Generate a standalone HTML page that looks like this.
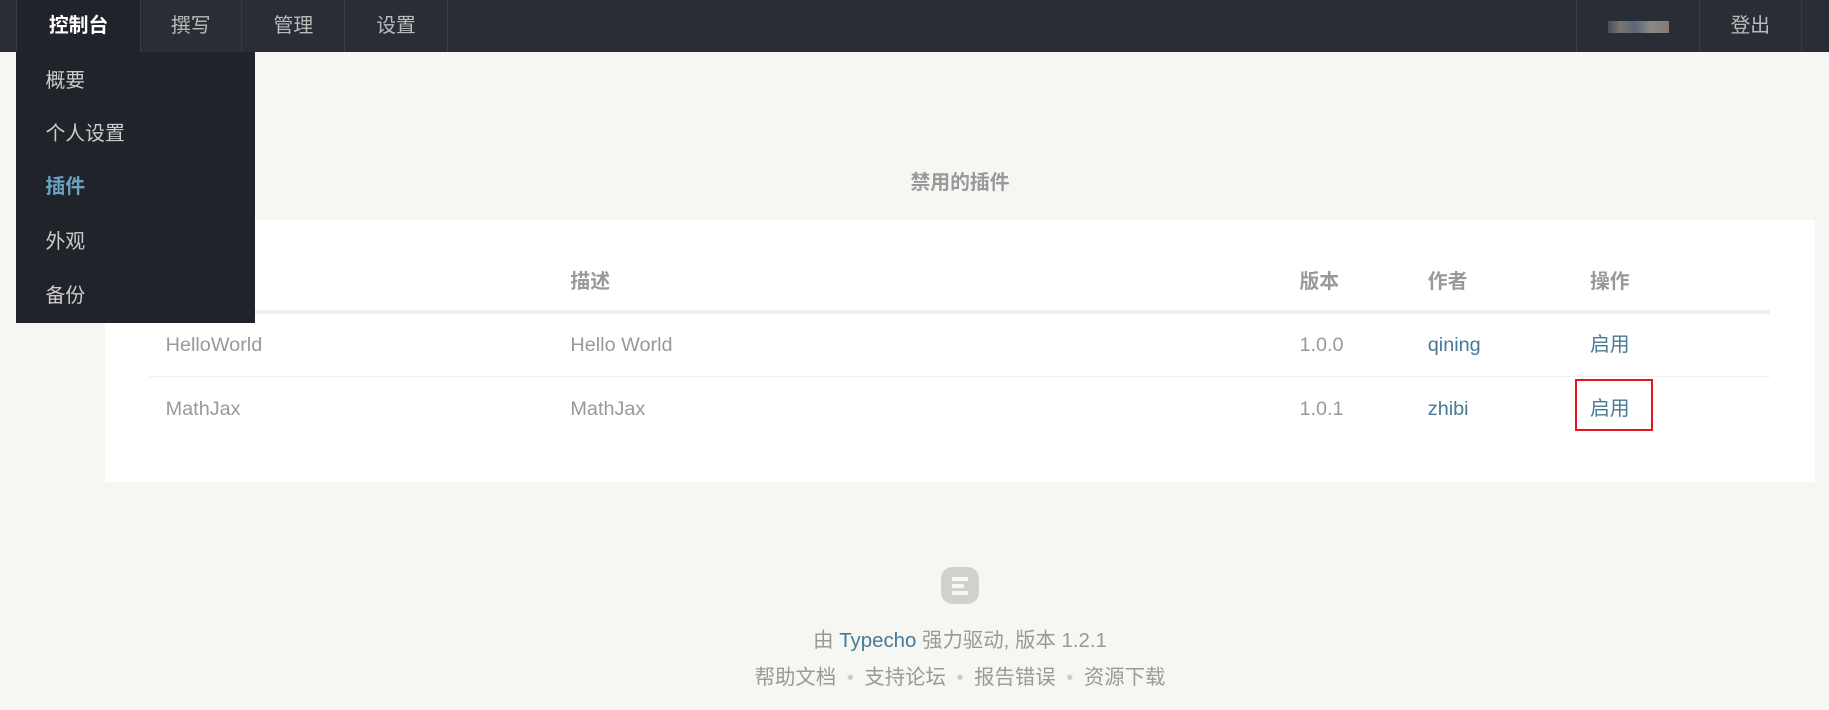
<!DOCTYPE html>
<html><head><meta charset="utf-8"><style>
html,body{margin:0;padding:0;overflow:hidden}
body{width:1829px;height:710px;background:#f6f6f3;font-family:"Liberation Sans","Noto Sans CJK SC",sans-serif}
#w{zoom:1.1665;position:relative;width:1568px;height:609px}
.a{position:absolute;white-space:nowrap;line-height:1}
#nav{position:absolute;left:0;top:0;width:1568px;height:45px;background:#292d35;z-index:5}
.ni{position:absolute;top:0;height:45px;border-right:1px solid #383c44;color:#bbb;font-size:17px;line-height:46px;text-align:center}
#dd{position:absolute;left:14px;top:45px;width:205px;height:232px;background:#202329;z-index:5}
.di{position:absolute;left:25px;color:#ccc;font-size:17px;line-height:1}
.g{color:#999;font-size:17px}
.b{color:#467b96;font-size:17px}
.h{color:#999;font-size:17px;font-weight:bold}
.s{color:#ccc;margin:0 9px}
</style></head><body><div id="w">
<div id="nav">
<div class="ni" style="left:14px;width:105px;background:#202329;color:#fff;font-weight:bold;border-left:1px solid #383c44">控制台</div>
<div class="ni" style="left:120px;width:87px">撰写</div>
<div class="ni" style="left:208px;width:87px">管理</div>
<div class="ni" style="left:296px;width:87px">设置</div>
<div class="ni" style="left:1351px;width:105px;border-left:1px solid #383c44"><span style="display:inline-block;width:52px;height:10px;margin-top:18px;background:linear-gradient(90deg,#4a4e55,#7a7470 20%,#5a6878 45%,#8a8a86 70%,#857a70);vertical-align:top"></span></div>
<div class="ni" style="left:1457px;width:87px">登出</div>
</div>
<div id="dd">
<div class="di" style="top:17px">概要</div>
<div class="di" style="top:62px">个人设置</div>
<div class="di" style="top:108px;color:#6aa3c2;font-weight:bold">插件</div>
<div class="di" style="top:155px">外观</div>
<div class="di" style="top:201px">备份</div>
</div>
<div class="a h" style="left:0;width:1646px;text-align:center;top:149px;font-size:17px">禁用的插件</div>
<div style="position:absolute;left:90px;top:189px;width:1466px;height:224px;background:#fff"></div>
<div style="position:absolute;left:128px;top:266px;width:1389px;height:3px;background:#f0f0ec"></div>
<div style="position:absolute;left:128px;top:322px;width:1389px;height:1px;background:#f0f0ec"></div>
<div class="a h" style="left:489px;top:234px">描述</div>
<div class="a h" style="left:1114px;top:234px">版本</div>
<div class="a h" style="left:1224px;top:234px">作者</div>
<div class="a h" style="left:1363px;top:234px">操作</div>
<div class="a g" style="left:142px;top:288px">HelloWorld</div>
<div class="a g" style="left:489px;top:288px">Hello World</div>
<div class="a g" style="left:1114px;top:288px">1.0.0</div>
<div class="a b" style="left:1224px;top:288px">qining</div>
<div class="a b" style="left:1363px;top:288px">启用</div>
<div class="a g" style="left:142px;top:343px">MathJax</div>
<div class="a g" style="left:489px;top:343px">MathJax</div>
<div class="a g" style="left:1114px;top:343px">1.0.1</div>
<div class="a b" style="left:1224px;top:343px">zhibi</div>
<div class="a b" style="left:1363px;top:343px">启用</div>
<div style="position:absolute;left:1350px;top:325px;width:64px;height:41px;border:2px solid #e3151f"></div>
<div style="position:absolute;left:807px;top:486px;width:32px;height:32px;border-radius:10px;background:#d0d0ce">
<div style="position:absolute;left:9px;top:9px;width:14px;height:3px;background:#f6f6f3"></div>
<div style="position:absolute;left:9px;top:15px;width:10px;height:3px;background:#f6f6f3"></div>
<div style="position:absolute;left:9px;top:21px;width:14px;height:3px;background:#f6f6f3"></div>
</div>
<div class="a g" style="left:0;width:1646px;text-align:center;top:541px;font-size:17.5px">由 <span style="color:#467b96">Typecho</span> 强力驱动, 版本 1.2.1</div>
<div class="a g" style="left:0;width:1646px;text-align:center;top:573px;font-size:17.5px">帮助文档<span class="s">•</span>支持论坛<span class="s">•</span>报告错误<span class="s">•</span>资源下载</div>
</div></body></html>
